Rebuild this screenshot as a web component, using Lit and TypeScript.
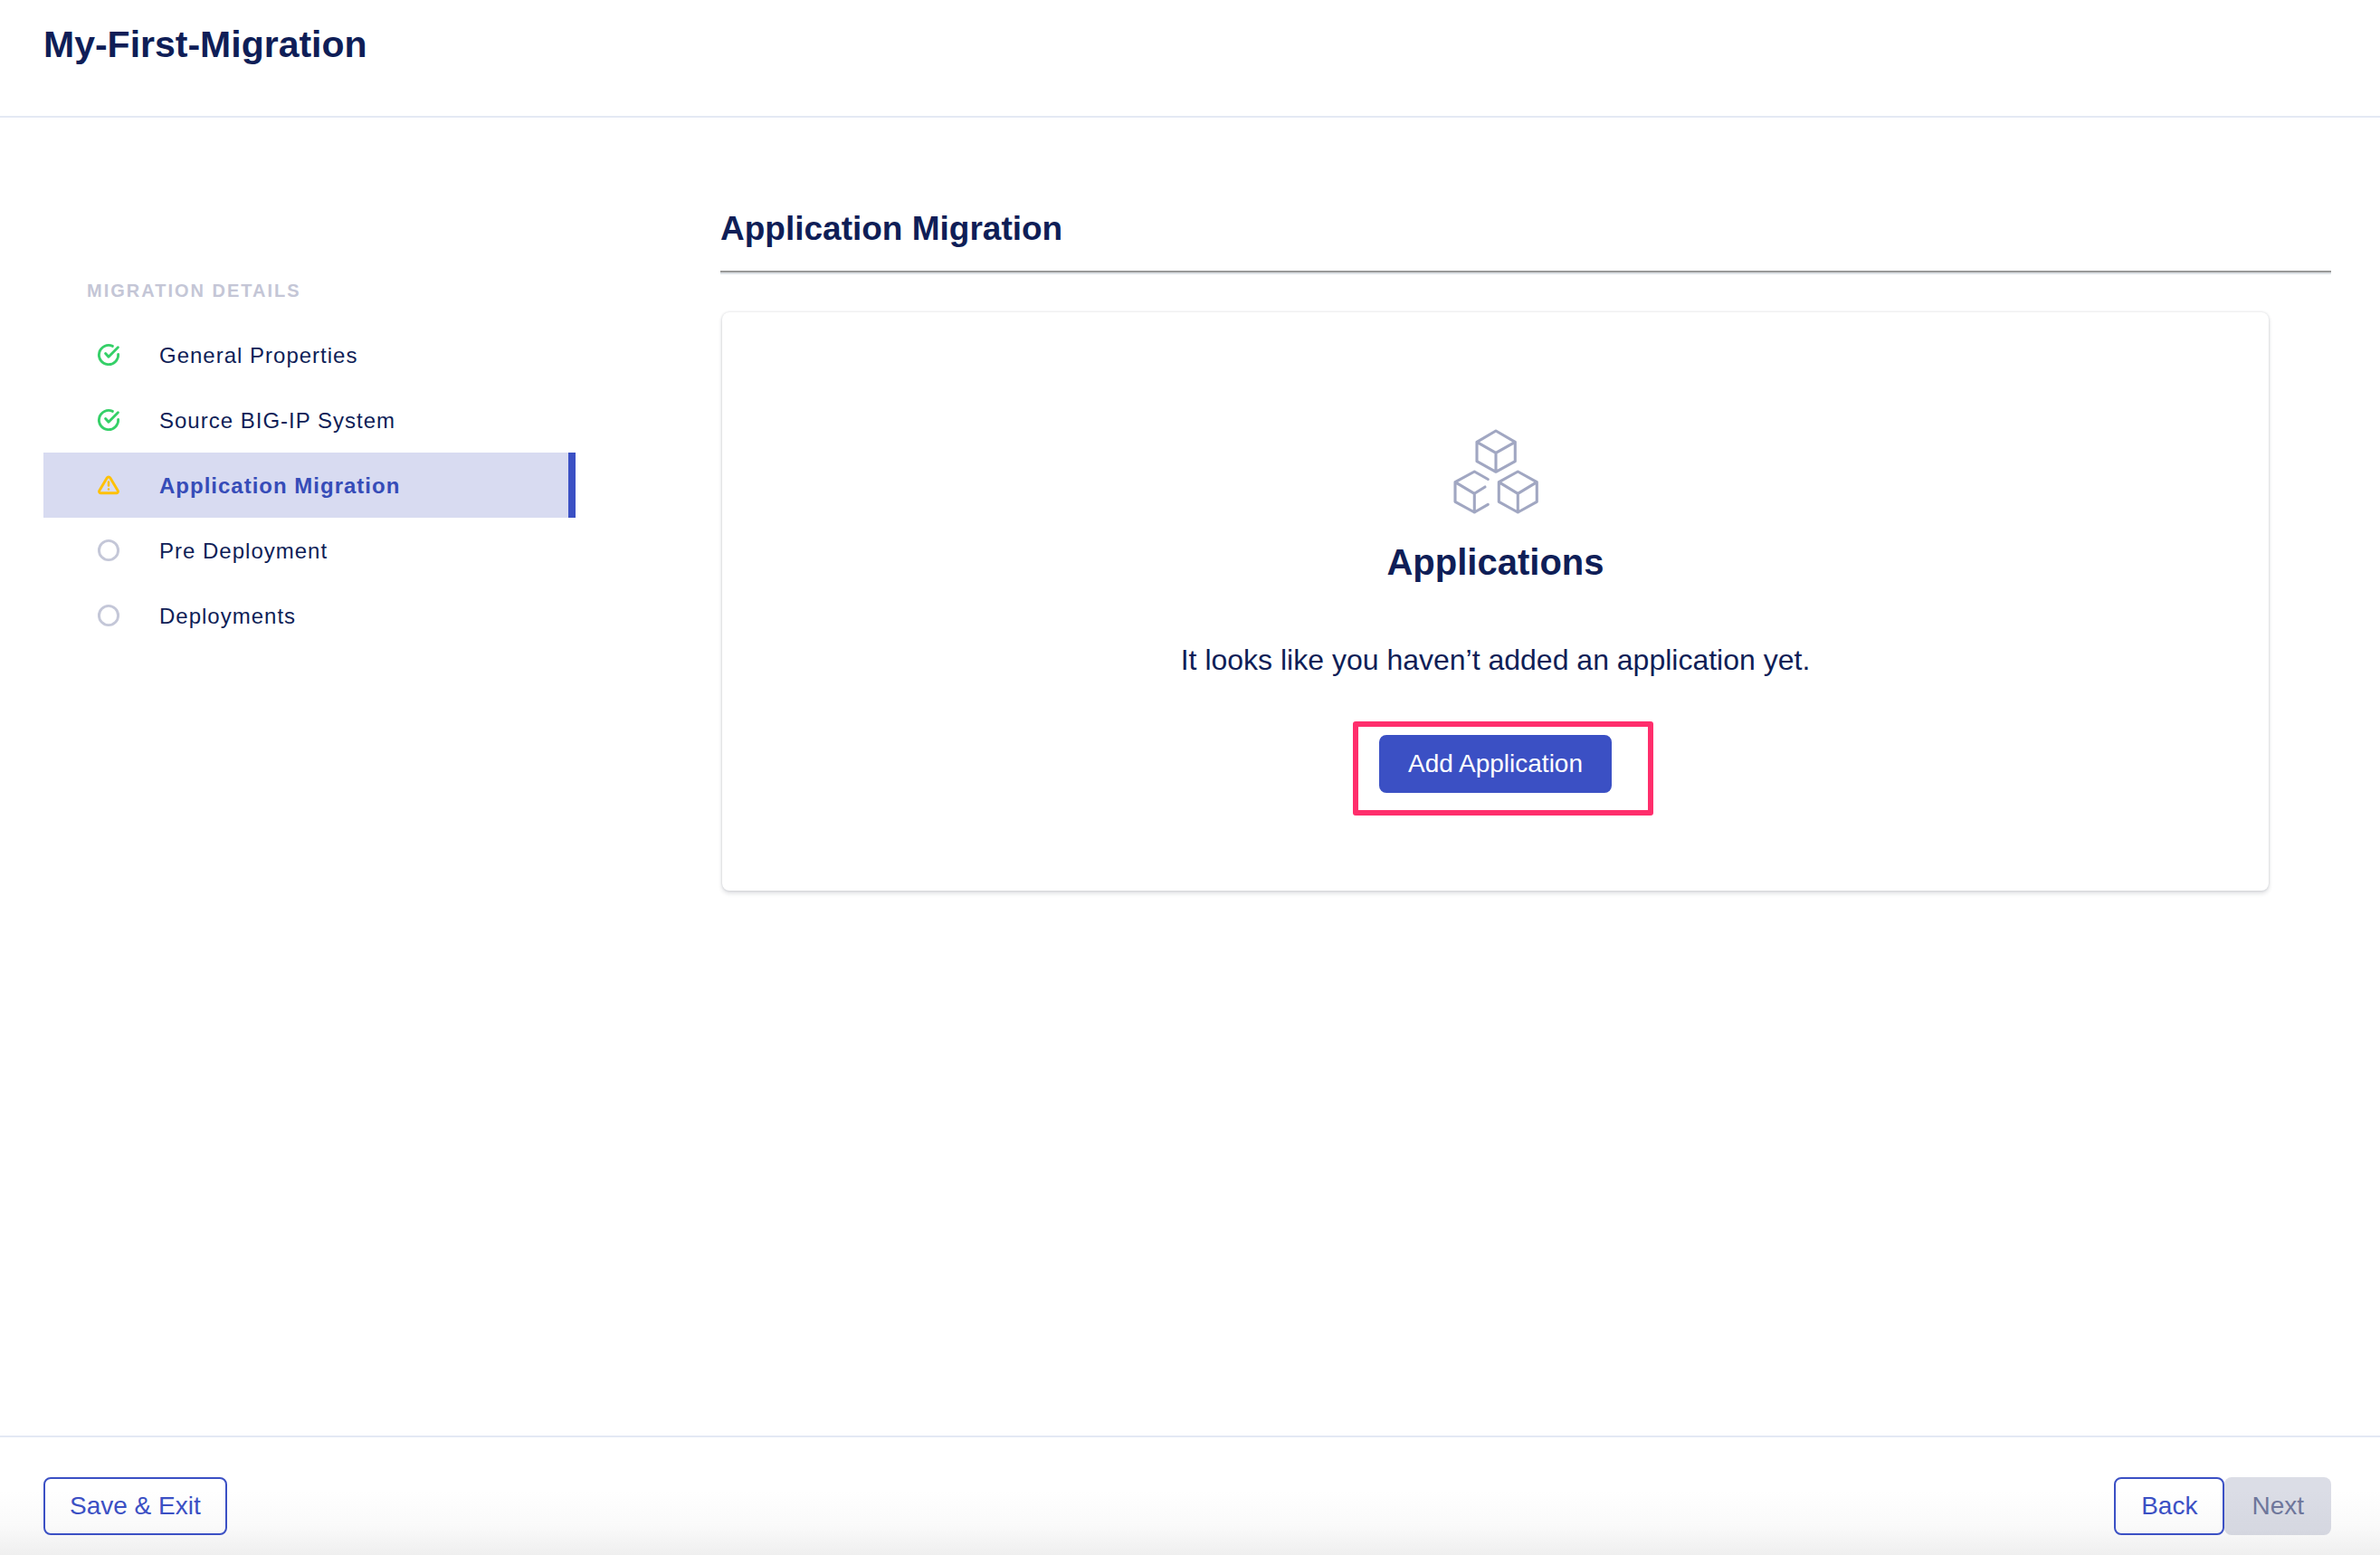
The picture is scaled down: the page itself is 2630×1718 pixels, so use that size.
import { LitElement, html, css, svg } from "lit";
import { customElement, property, state } from "lit/decorators.js";
import { classMap } from "lit/directives/class-map.js";

type StepStatus = "done" | "warning" | "pending";

interface Step {
  label: string;
  status: StepStatus;
}

const statusShapes = {
  done: svg`
    <path d="M16.4 2.4A10.6 10.6 0 1 0 22.6 11.4" />
    <path d="M8.6 10.6L12 14.2L22.4 3.8" />`,
  warning: svg`
    <path d="M10.2 4L1.7 18.2A1.7 1.7 0 0 0 3.1 20.7H20.9A1.7 1.7 0 0 0 22.3 18.2L13.8 4A2.1 2.1 0 0 0 10.2 4Z" />
    <path class="thin" d="M12 8.6V12.6M12 16.4V16.6" />`,
  pending: svg`<circle cx="12" cy="12" r="10.6" />`,
};

@customElement("status-icon")
export class StatusIcon extends LitElement {
  static styles = css`
    :host {
      display: block;
      width: 24px;
      height: 24px;
      flex: none;
    }
    svg {
      display: block;
      overflow: visible;
      fill: none;
      stroke-width: 2.9;
      stroke-linecap: round;
      stroke-linejoin: round;
    }
    .thin {
      stroke-width: 2.5;
    }
    .done {
      stroke: #35d068;
    }
    .warning {
      stroke: #ffc107;
    }
    .pending {
      stroke: #c4c7d8;
    }
  `;

  @property() status: StepStatus = "pending";

  render() {
    return html`<svg class=${this.status} width="24" height="24" viewBox="0 0 24 24" aria-hidden="true">
      ${statusShapes[this.status]}
    </svg>`;
  }
}

@customElement("app-root")
export class AppRoot extends LitElement {
  static styles = css`
    :host {
      display: flex;
      flex-direction: column;
      min-height: 100vh;
      box-sizing: border-box;
      background: #fff;
      color: #0f1e57;
      font-family: "Liberation Sans", Arial, sans-serif;
    }
    h1,
    h2,
    h3,
    p,
    ul {
      margin: 0;
      padding: 0;
    }
    .header {
      padding: 25px 48px 55px;
      border-bottom: 2px solid #e4e9f4;
    }
    .title {
      font-size: 41px;
      line-height: 48px;
    }
    .body {
      flex: 1;
      display: flex;
      gap: 160px;
      padding: 100px 54px 40px 48px;
    }
    .sidebar {
      flex: none;
      width: 588px;
      padding-top: 79px;
    }
    .sidebar-title {
      padding-left: 48px;
      margin-bottom: 23px;
      font-size: 20px;
      line-height: 24px;
      letter-spacing: 2px;
      text-transform: uppercase;
      color: #c4c6d6;
    }
    .steps {
      list-style: none;
    }
    .step {
      display: flex;
      align-items: center;
      gap: 44px;
      height: 72px;
      padding-left: 60px;
      font-size: 24px;
      line-height: 28px;
      letter-spacing: 1px;
      color: inherit;
      text-decoration: none;
    }
    .step-label {
      padding-top: 2px;
    }
    .step.active {
      background: #d8dbf1;
      border-right: 8px solid #3b50c4;
      color: #364cb8;
      font-weight: bold;
    }
    .main {
      flex: 1;
      min-width: 0;
    }
    .section-title {
      padding-top: 1px;
      font-size: 37px;
      line-height: 44px;
    }
    .rule {
      margin: 24px 0 42px;
      border: 0;
      border-top: 2px solid #999;
      border-bottom: 2px solid #dee2e6;
    }
    .card {
      display: flex;
      flex-direction: column;
      align-items: center;
      margin: 0 69px 0 2px;
      padding: 128px 32px 108px;
      border-radius: 8px;
      box-shadow: 0 0 3px rgba(20, 30, 50, 0.16), 0 3px 5px rgba(20, 30, 50, 0.14);
    }
    .cubes {
      display: block;
      fill: none;
      stroke: #a1a7c2;
      stroke-width: 3.1;
      stroke-linecap: round;
      stroke-linejoin: round;
    }
    .card-title {
      margin-top: 28px;
      font-size: 40px;
      line-height: 48px;
    }
    .card-text {
      margin: 64px 0 63px;
      font-size: 32px;
      line-height: 40px;
    }
    .button {
      height: 64px;
      padding: 0 27px;
      border: 2px solid #3b50c4;
      border-radius: 8px;
      background: #fff;
      color: #3b50c4;
      font-family: inherit;
      font-size: 28px;
      line-height: 32px;
      cursor: pointer;
    }
    .button.ghost {
      background: transparent;
    }
    .nav .button {
      padding: 0 28px;
    }
    .button.primary {
      padding: 0 30px;
      background: #3b50c4;
      color: #fff;
    }
    .button:disabled {
      border-color: transparent;
      background: rgba(15, 30, 87, 0.15);
      background-clip: border-box;
      background-origin: border-box;
      color: #6e769b;
      cursor: default;
    }
    .callout {
      position: relative;
    }
    .callout::after {
      content: "";
      position: absolute;
      inset: -15px -46px -25px -29px;
      border: 6px solid #ff2e6c;
      border-radius: 3px;
      pointer-events: none;
    }
    .footer {
      display: flex;
      justify-content: space-between;
      padding: 44px 54px 22px 48px;
      border-top: 2px solid #e4e9f4;
      background: linear-gradient(to bottom, #fff 45%, #fafafa 75%, #efefef);
    }
    .nav {
      display: flex;
    }
  `;

  @state() private current = 2;

  private steps: Step[] = [
    { label: "General Properties", status: "done" },
    { label: "Source BIG-IP System", status: "done" },
    { label: "Application Migration", status: "warning" },
    { label: "Pre Deployment", status: "pending" },
    { label: "Deployments", status: "pending" },
  ];

  private select(event: Event, index: number) {
    event.preventDefault();
    this.current = index;
  }

  private renderStep(step: Step, index: number) {
    const active = index === this.current;
    return html`<li>
      <a
        class=${classMap({ step: true, active })}
        href="#step-${index + 1}"
        aria-current=${active ? "step" : "false"}
        @click=${(event: Event) => this.select(event, index)}
      >
        <status-icon status=${step.status}></status-icon>
        <span class="step-label">${step.label}</span>
      </a>
    </li>`;
  }

  render() {
    return html`
      <header class="header"><h1 class="title">My-First-Migration</h1></header>
      <div class="body">
        <nav class="sidebar">
          <h2 class="sidebar-title">Migration Details</h2>
          <ul class="steps">
            ${this.steps.map((step, index) => this.renderStep(step, index))}
          </ul>
        </nav>
        <main class="main">
          <h2 class="section-title">Application Migration</h2>
          <hr class="rule" />
          <section class="card">
            <svg class="cubes" width="96" height="96" viewBox="25 23 96 96" aria-hidden="true">
              <path d="M73 26L94.3 38.3V59.7L73 71.3L52 59.7V38.3ZM52 38.3L73 50.3L94.3 38.3M73 50.3V71.3" />
              <path d="M64.3 79.5L49.3 71L28 82.7V104.3L49.3 116L64.3 107.3M28 82.7L49.3 95.3L61 88M49.3 95.3V116" />
              <path d="M97.3 71L118.3 82.7V104.3L97.3 116L76.3 104.3V82.7ZM76.3 82.7L97.3 95.3L118.3 82.7M97.3 95.3V116" />
            </svg>
            <h3 class="card-title">Applications</h3>
            <p class="card-text">It looks like you haven’t added an application yet.</p>
            <div class="callout">
              <button class="button primary" type="button">Add Application</button>
            </div>
          </section>
        </main>
      </div>
      <footer class="footer">
        <button class="button ghost" type="button">Save &amp; Exit</button>
        <div class="nav">
          <button class="button ghost" type="button">Back</button>
          <button class="button" type="button" disabled>Next</button>
        </div>
      </footer>
    `;
  }
}
